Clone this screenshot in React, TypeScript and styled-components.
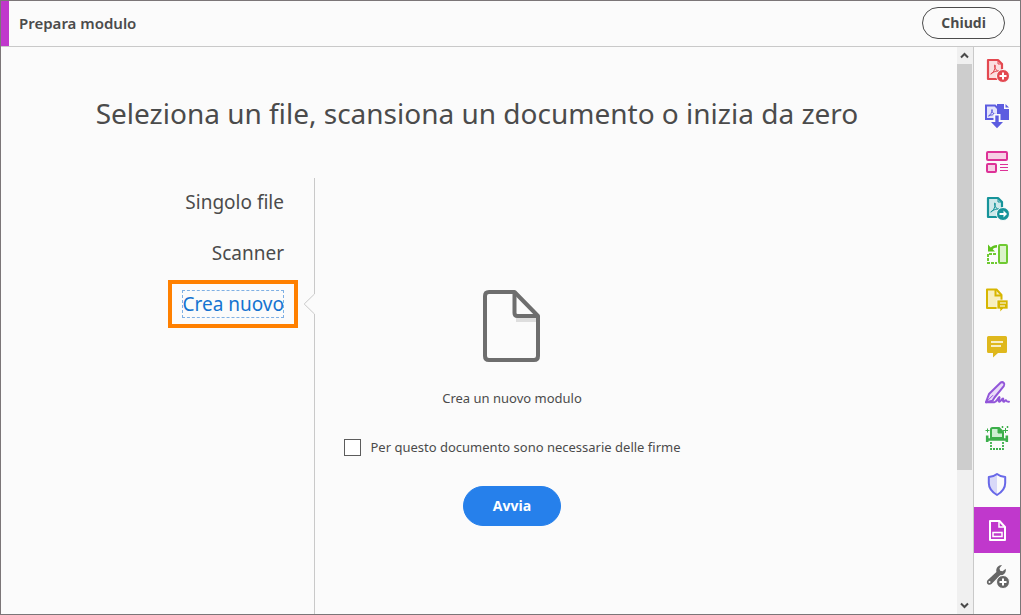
import React, { useState } from "react";
import styled, { createGlobalStyle, css } from "styled-components";

const GlobalStyle = createGlobalStyle`
  *, *::before, *::after { box-sizing: border-box; }
  html, body, #root { height: 100%; }
  body {
    margin: 0;
    background: #fbfbfb;
    color: #4b4b4b;
    font-family: "Noto Sans", "Open Sans", sans-serif;
  }
  button, input { font: inherit; color: inherit; }
`;

const Window = styled.div`
  display: flex;
  flex-direction: column;
  min-height: 100%;
  border: 1px solid #7b7678;
  background: #fbfbfb;
`;

const Header = styled.header`
  display: flex;
  align-items: center;
  height: 46px;
  padding-right: 15px;
  border-bottom: 1px solid #c9c9c9;
  & > h1, & > button {
    margin-bottom: 2px;
  }
`;

const Accent = styled.span`
  align-self: stretch;
  width: 8px;
  margin-right: 10px;
  background: #c038cc;
`;

const HeaderTitle = styled.h1`
  flex: 1;
  margin: 0;
  font-size: 15px;
  font-weight: 600;
  line-height: 20px;
`;

const PillButton = styled.button<{ $primary?: boolean }>`
  display: flex;
  align-items: center;
  justify-content: center;
  padding: 0 18px;
  height: 32px;
  border: 1px solid #4b4b4b;
  border-radius: 20px;
  background: transparent;
  font-family: "Open Sans", sans-serif;
  font-size: 14px;
  font-weight: 700;
  line-height: 20px;
  cursor: pointer;
  ${(p) =>
    p.$primary &&
    css`
      height: 40px;
      padding: 0 29px;
      border-color: #2680eb;
      background: #2680eb;
      color: #fff;
    `}
`;

const Body = styled.div`
  display: flex;
  flex: 1;
`;

const Main = styled.main`
  display: flex;
  flex-direction: column;
  flex: 1;
  min-width: 0;
`;

const Heading = styled.h2`
  margin: 46px 4px 44px 0;
  font-size: 28px;
  font-weight: 400;
  line-height: 41px;
  text-align: center;
`;

const Columns = styled.div`
  display: grid;
  grid-template-columns: 313px minmax(0, 395px);
  flex: 1;
`;

const SourceList = styled.nav`
  display: flex;
  flex-direction: column;
  align-items: flex-end;
  gap: 3px;
  padding-right: 16px;
`;

const SourceLink = styled.a<{ $active?: boolean }>`
  position: relative;
  padding: 6px 10px;
  border: 4px solid ${(p) => (p.$active ? "#ff8000" : "transparent")};
  color: ${(p) => (p.$active ? "#1473d0" : "inherit")};
  font-size: 19px;
  line-height: 28px;
  text-decoration: none;
  & > span {
    display: block;
    outline: ${(p) => (p.$active ? "1px dashed #7fb0e4" : "none")};
    outline-offset: -1px;
  }
`;

const Notch = styled.svg`
  position: absolute;
  z-index: 1;
  left: 100%;
  top: 50%;
  width: 12px;
  height: 20px;
  margin-left: 9px;
  transform: translateY(-50%);
`;

const Panel = styled.section`
  display: flex;
  flex-direction: column;
  align-items: center;
  padding-top: 112px;
  border-left: 1px solid #c9c9c9;
`;

const Caption = styled.p`
  margin: 26px 0 29px;
  font-size: 13px;
  line-height: 20px;
`;

const CheckLabel = styled.label`
  display: flex;
  align-items: center;
  gap: 10px;
  margin-bottom: 29px;
  font-size: 13px;
  line-height: 20px;
  white-space: nowrap;
`;

const Checkbox = styled.input`
  appearance: none;
  width: 17px;
  height: 17px;
  margin: 0;
  border: 1px solid #5c5c5c;
  background: #fff;
  &:checked {
    background: #2680eb;
  }
`;

const ScrollTrack = styled.div`
  display: flex;
  flex-direction: column;
  width: 16px;
  background: #f0f0f0;
`;

const ScrollArrow = styled.button`
  display: flex;
  align-items: center;
  justify-content: center;
  width: 15px;
  height: 17px;
  padding: 0;
  border: 0;
  background: transparent;
`;

const ScrollRail = styled.div`
  flex: 1;
`;

const ScrollThumb = styled.div`
  width: 15px;
  height: 76%;
  min-height: 406px;
  background: #cdcdcd;
`;

const Toolbar = styled.aside`
  display: flex;
  flex-direction: column;
  border-left: 1px solid #c9c9c9;
`;

const ToolButton = styled.button<{ $active?: boolean }>`
  width: 46px;
  height: 46px;
  padding: 0;
  border: 0;
  background: ${(p) => (p.$active ? "#c038cc" : "transparent")};
  cursor: pointer;
  & > svg {
    display: block;
  }
`;

const Acrobat = () => (
  <path
    d="M17 27c2-1 4-4 4.300-8 .1-1.500-1-1.500-.8 0 .4 3 2.500 5.500 5 5.800 1 0 .8-1 0-1-3 0-6 1-8.300 2.700-.6.600-.6.900-.2.500z"
    strokeWidth="1"
    fill="none"
  />
);

const PdfPage = ({ tint }: { tint: string }) => (
  <>
    <path d="M14 13h10l4 4v15H14z" fill={tint} strokeWidth="2.200" strokeLinejoin="round" />
    <path d="M24 13v4h4" fill="none" strokeWidth="1" />
    <Acrobat />
  </>
);

const tools: { name: string; color: string; active?: boolean; art: React.ReactNode }[] = [
  {
    name: "Crea PDF",
    color: "#e34850",
    art: (
      <>
        <PdfPage tint="#fbdfe0" />
        <circle cx="29" cy="29" r="6.500" fill="#e34850" stroke="#fbfbfb" />
        <path d="M29 25.500v7M25.500 29h7" stroke="#fff" strokeWidth="2" />
      </>
    ),
  },
  {
    name: "Combina file",
    color: "#5c5ce0",
    art: (
      <>
        <path d="M23 11h7v5h5v11H23z" fill="#5c5ce0" stroke="none" />
        <path d="M31.500 11v3.500H35z" fill="#5c5ce0" stroke="none" />
        <path d="M12 12.500h9l3 3V26H12z" fill="#e3e3fa" strokeWidth="2" />
        <path d="M14.500 23c2-1 3.500-3.500 3.500-6.500 0 3 1.500 5 4 5-3 0-5 .5-7.500 1.500z" fill="none" />
        <path d="M19.500 21h7v7h-7z" fill="#fbfbfb" stroke="none" />
        <path d="M21.300 22.500h3.400V29h4.300l-6 6.300L17 29h4.300z" fill="#5c5ce0" stroke="none" />
      </>
    ),
  },
  {
    name: "Organizza pagine",
    color: "#dd3297",
    art: (
      <>
        <rect x="13" y="13" width="20" height="8" rx="1" fill="#f7cfe5" strokeWidth="2" />
        <rect x="13" y="25" width="9" height="8" rx="1" fill="#f7cfe5" strokeWidth="2" />
        <path d="M26 25.500h8M26 28.500h8M26 31.500h8" />
      </>
    ),
  },
  {
    name: "Esporta PDF",
    color: "#16949a",
    art: (
      <>
        <PdfPage tint="#cfe9ea" />
        <circle cx="29" cy="29" r="6.500" fill="#16949a" stroke="#fbfbfb" />
        <path d="M25.500 29h5.500" stroke="#fff" strokeWidth="2" />
        <path d="M29.500 25.500l3.500 3.500-3.500 3.500z" fill="#fff" stroke="none" />
      </>
    ),
  },
  {
    name: "Ruota pagine",
    color: "#6fca32",
    art: (
      <>
        <rect x="25" y="14" width="8" height="18" rx="1" fill="#dcf3cb" strokeWidth="2" />
        <path d="M22 23h-8v9h9" fill="none" strokeWidth="2" strokeDasharray="3 1" />
        <path d="M14 13.500v7h7l-2.300-2.300c1-1 2-1.500 4.300-1.700v-2.500c-3 0-4.700.9-6.200 2.400z" fill="#5fc21e" stroke="none" />
      </>
    ),
  },
  {
    name: "Aggiungi commento",
    color: "#d7b600",
    art: (
      <>
        <path d="M13 12.500h9.500l5 5.500V31H13z" fill="#f8efbe" strokeWidth="2" strokeLinejoin="round" />
        <path d="M21.500 12.500v6h6" fill="none" strokeWidth="2" />
        <path d="M23 23h11v9h-5l-3 3v-3h-3z" fill="#d7b600" stroke="#fbfbfb" strokeWidth=".7" />
        <path d="M26 26h6M26 29h5" stroke="#fff" />
      </>
    ),
  },
  {
    name: "Commenta",
    color: "#dfb81d",
    art: (
      <>
        <path d="M14.500 13h17q1.500 0 1.500 1.500v14q0 1.500-1.500 1.500H24l-5 4.500V30h-4.500Q13 30 13 28.500v-14Q13 13 14.500 13z" fill="#dfb81d" stroke="none" />
        <path d="M17 19h12M17 23h10" stroke="#fff" strokeWidth="1.500" />
      </>
    ),
  },
  {
    name: "Compila e firma",
    color: "#9256d9",
    art: (
      <>
        <path d="M15 25l11.500-11.300q1.800-1.200 3.300.2 1.300 1.600 0 3.300L20.500 28.500l-2 3.300L12 33.200z" fill="#eadcf8" strokeWidth="2" strokeLinejoin="round" />
        <path d="M12 33.200l7-7" fill="none" />
        <path d="M12 33.200h8.500c2 0 4.500-6 5-5 .5.800-2 5 0 4.500 1.500-.3 2.500-3.500 3.500-3.200 1 .3-1 3.300.8 3.200 1 0 1.200-1.800 2-1.500.7.300.5 1.800 3.200 1.500" fill="none" strokeWidth="2" strokeLinecap="round" strokeLinejoin="round" />
      </>
    ),
  },
  {
    name: "Scansione e OCR",
    color: "#3caf4b",
    art: (
      <>
        <path d="M17 23v-8.500q0-1.500 1.500-1.500H25l4 4v6z" fill="#cdeed2" strokeWidth="2" />
        <path d="M24 13v5h5z" fill="#3caf4b" />
        <path d="M13.200 20.500v6.500M32.800 20.500v6.500M12 24.500h22" fill="none" strokeWidth="2.600" />
        <path d="M17 27v7h12v-7" fill="#fbfbfb" strokeWidth="1.800" strokeDasharray="2 1" />
        <path d="M13.500 13.500v4M11.500 15.500h4M31.500 13v5M29 15.500h5M28.500 11v2M27.500 12h2M33.500 11v2M32.500 12h2" />
      </>
    ),
  },
  {
    name: "Proteggi",
    color: "#6868e8",
    art: (
      <>
        <path d="M23 13v21c-5-3-8-7-8-12v-6c3 0 5.500-1 8-3z" fill="#d9d9f8" stroke="none" />
        <path d="M23 13c2.500 2 5 3 8.200 3v6c0 5-3.200 9-8.200 12-5-3-8.200-7-8.200-12v-6c3.200 0 5.700-1 8.200-3z" fill="none" strokeWidth="2" strokeLinejoin="round" />
      </>
    ),
  },
  {
    name: "Prepara modulo",
    color: "#ffffff",
    active: true,
    art: (
      <>
        <path d="M16 14h9.500l5.500 6v13H16z" fill="none" strokeWidth="2" strokeLinejoin="round" />
        <path d="M25 14v6h6" fill="none" strokeWidth="1.500" />
        <rect x="19" y="25.500" width="9" height="4" fill="none" strokeWidth="1.500" />
      </>
    ),
  },
  {
    name: "Altri strumenti",
    color: "#666666",
    art: (
      <>
        <path
          d="M28 12l-2.500 3.200.6 2.500 2.500.6 3.100-2.600c.8 3.600-1.700 6.900-5.600 6.500l-8.600 8.800c-2.800 2.200-6-.8-4-3.800l8.900-8.200c-.7-4 1.800-7 5.600-7z"
          fill="#666666"
          stroke="none"
        />
        <circle cx="15.500" cy="29" r="1" fill="#fbfbfb" stroke="none" />
        <circle cx="29" cy="29" r="6.500" fill="#666666" stroke="#fbfbfb" />
        <path d="M29 25.500v7M25.500 29h7" stroke="#fff" strokeWidth="2" />
      </>
    ),
  },
];

const sources = ["Singolo file", "Scanner", "Crea nuovo"];

const Chevron = ({ down = false }: { down?: boolean }) => (
  <svg width="9" height="7" viewBox="0 0 9 7" fill="none" stroke="#4a4a4a" strokeWidth="2">
    <path d={down ? "M1 1.500l3.500 3.500L8 1.500" : "M1 5.500L4.500 2 8 5.500"} />
  </svg>
);

const NewPageArt = () => (
  <svg width="58" height="72" viewBox="0 0 58 72" fill="none" stroke="#6e6e6e" strokeWidth="4" strokeLinejoin="round">
    <path d="M33 29.500h20" stroke="#dedede" strokeWidth="5" />
    <path d="M6 2h25.500L55 26v40q0 4-4 4H6q-4 0-4-4V6q0-4 4-4z" />
    <path d="M31.500 3v20q0 3 3 3H55" />
  </svg>
);

export default function App() {
  const [selected, setSelected] = useState("Crea nuovo");
  return (
    <>
      <GlobalStyle />
      <Window>
        <Header>
          <Accent />
          <HeaderTitle>Prepara modulo</HeaderTitle>
          <PillButton type="button">Chiudi</PillButton>
        </Header>
        <Body>
          <Main>
            <Heading>Seleziona un file, scansiona un documento o inizia da zero</Heading>
            <Columns>
              <SourceList>
                {sources.map((s) => (
                  <SourceLink
                    key={s}
                    href="#"
                    $active={s === selected}
                    onClick={(e) => {
                      e.preventDefault();
                      setSelected(s);
                    }}
                  >
                    <span>{s}</span>
                    {s === selected && (
                      <Notch viewBox="0 0 12 20">
                        <path d="M12 0h-1.500L1 10l9.500 10H12z" fill="#fbfbfb" />
                        <path d="M11.500 0L1.200 10l10.300 10" fill="none" stroke="#c9c9c9" />
                      </Notch>
                    )}
                  </SourceLink>
                ))}
              </SourceList>
              <Panel>
                <NewPageArt />
                <Caption>Crea un nuovo modulo</Caption>
                <CheckLabel>
                  <Checkbox type="checkbox" />
                  Per questo documento sono necessarie delle firme
                </CheckLabel>
                <PillButton type="button" $primary>
                  Avvia
                </PillButton>
              </Panel>
            </Columns>
          </Main>
          <ScrollTrack>
            <ScrollArrow type="button" aria-label="Scorri su">
              <Chevron />
            </ScrollArrow>
            <ScrollRail>
              <ScrollThumb />
            </ScrollRail>
            <ScrollArrow type="button" aria-label="Scorri giù">
              <Chevron down />
            </ScrollArrow>
          </ScrollTrack>
          <Toolbar>
            {tools.map((t) => (
              <ToolButton key={t.name} type="button" aria-label={t.name} $active={t.active}>
                <svg width="46" height="46" viewBox="0 0 46 46" fill="none" stroke={t.color}>
                  {t.art}
                </svg>
              </ToolButton>
            ))}
          </Toolbar>
        </Body>
      </Window>
    </>
  );
}
